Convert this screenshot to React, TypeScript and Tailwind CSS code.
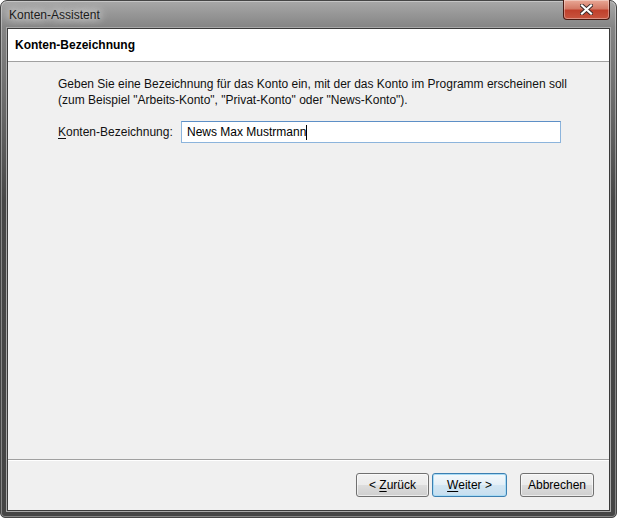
export default function App() {
  return (
    <div className="w-[617px] h-[518px] bg-white font-['Liberation_Sans',Arial,sans-serif] text-[12px] text-black">
      <div className="relative flex flex-col w-[617px] h-[518px] px-[6px] pb-[6px] rounded-t-[7px] rounded-b-[5px] border border-[#454545] shadow-[inset_0_0_0_1px_rgba(255,255,255,0.35)] bg-[linear-gradient(to_bottom,#a8a8a8_0px,#858585_26px,#646464_120px,#474747_200px,#454545_100%)]">
        {/* title bar */}
        <div className="h-[27px] flex items-center pl-[2px]">
          <span className="text-[12px] text-[#1b1b1b] [text-shadow:0_0_8px_#ffffff,0_0_12px_#ffffff]">Konten-Assistent</span>
        </div>

        {/* close button */}
        <div className="absolute top-[-1px] right-[6px] w-[47px] h-[20px] rounded-b-[4px] border border-t-0 border-[#4a1a12] bg-[linear-gradient(to_bottom,#e9a896_0%,#d47a66_45%,#c0402c_55%,#c8553f_100%)] shadow-[inset_0_0_0_1px_rgba(255,255,255,0.35)] flex items-center justify-center">
          <svg width="13" height="11" viewBox="0 0 13 11">
            <path d="M2 1.5 L11 9.5 M11 1.5 L2 9.5" stroke="#3a2a2a" strokeWidth="4" strokeLinecap="square" />
            <path d="M2 1.5 L11 9.5 M11 1.5 L2 9.5" stroke="#ffffff" strokeWidth="2.2" strokeLinecap="square" />
          </svg>
        </div>

        {/* client area */}
        <div className="flex-1 flex flex-col bg-[#f0f0f0] border border-[#3a3a3a] shadow-[0_0_0_1px_#a8a8a8]">
          <div className="h-[33px] bg-white border-b border-[#a0a0a0] flex items-center pl-[7px]">
            <span className="font-bold leading-[16px]">Konten-Bezeichnung</span>
          </div>

          <div className="flex-1 pl-[50px] pt-[14px]">
            <p className="leading-[16px] text-[#111]">
              Geben Sie eine Bezeichnung für das Konto ein, mit der das Konto im Programm erscheinen soll
              <br />
              (zum Beispiel "Arbeits-Konto", "Privat-Konto" oder "News-Konto").
            </p>
            <div className="mt-[13px] flex items-center h-[22px]">
              <span className="w-[123px] leading-[16px] text-[#111]">
                <span className="underline underline-offset-2">K</span>onten-Bezeichnung:
              </span>
              <div className="w-[380px] h-[22px] bg-white border border-[#8cb4dc] border-t-[#5d8fc6] flex items-center pl-[5px]">
                <span className="leading-[16px]">News Max Mustrmann</span>
                <span className="w-px h-[15px] bg-black" />
              </div>
            </div>
          </div>

          <div className="border-t border-[#a0a0a0]">
            <div className="border-t border-white flex justify-end items-center pt-[12px] pb-[13px] pr-[15px]">
              <button className="w-[73px] h-[24px] rounded-[3px] border border-[#707070] bg-[linear-gradient(to_bottom,#f2f2f2_0%,#ebebeb_49%,#dddddd_50%,#cfcfcf_100%)] shadow-[inset_0_0_0_1px_rgba(255,255,255,0.6)] text-[12px] text-black">
                &lt; <span className="underline underline-offset-2">Z</span>urück
              </button>
              <button className="ml-[3px] w-[75px] h-[24px] rounded-[3px] border border-[#3c7fb1] bg-[linear-gradient(to_bottom,#f4f9fc_0%,#e4eff7_49%,#d3e6f3_50%,#c6deef_100%)] shadow-[inset_0_0_0_1px_#a8dbf5] text-[12px] text-black">
                <span className="underline underline-offset-2">W</span>eiter &gt;
              </button>
              <button className="ml-[13px] w-[74px] h-[24px] rounded-[3px] border border-[#707070] bg-[linear-gradient(to_bottom,#f2f2f2_0%,#ebebeb_49%,#dddddd_50%,#cfcfcf_100%)] shadow-[inset_0_0_0_1px_rgba(255,255,255,0.6)] text-[12px] text-black">
                Abbrechen
              </button>
            </div>
          </div>
        </div>
      </div>
    </div>
  );
}
